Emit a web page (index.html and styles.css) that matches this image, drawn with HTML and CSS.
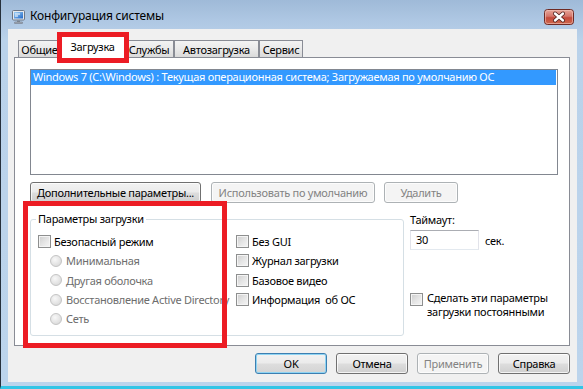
FILE: index.html
```html
<!DOCTYPE html>
<html lang="ru">
<head>
<meta charset="utf-8">
<title>Конфигурация системы</title>
<link rel="stylesheet" href="styles.css">
</head>
<body>
<div class="window">
  <div class="titlebar">
    <svg class="app-icon" width="13" height="14" viewBox="0 0 13 14">
      <defs>
        <linearGradient id="scr" x1="0" y1="0" x2="1" y2="1">
          <stop offset="0" stop-color="#9fd0f5"/>
          <stop offset="1" stop-color="#1f66c7"/>
        </linearGradient>
      </defs>
      <rect x="0.5" y="0.5" width="12" height="9.5" rx="1" fill="#e6e9ee" stroke="#6d7684"/>
      <rect x="2" y="2" width="9" height="6.5" fill="url(#scr)"/>
      <path d="M3 4h5M3 6h3" stroke="#fff" stroke-width="1"/>
      <rect x="5" y="10.5" width="3" height="1.5" fill="#7f8894"/>
      <rect x="2.5" y="12" width="8" height="1.6" rx="0.5" fill="#a6adb8" stroke="#6d7684" stroke-width="0.6"/>
    </svg>
    <span class="title">Конфигурация системы</span>
    <div class="close">
      <svg width="30" height="16" viewBox="0 0 30 16">
        <defs>
          <linearGradient id="cl" x1="0" y1="0" x2="0" y2="1">
            <stop offset="0" stop-color="#e9a99c"/>
            <stop offset="0.45" stop-color="#d4756a"/>
            <stop offset="0.55" stop-color="#c44a3c"/>
            <stop offset="1" stop-color="#cf6a4d"/>
          </linearGradient>
        </defs>
        <rect x="0.5" y="0.5" width="29" height="15" rx="3" fill="url(#cl)" stroke="#6e2a24"/>
        <rect x="1.5" y="1.5" width="27" height="13" rx="2" fill="none" stroke="#f2c5bc" stroke-opacity="0.6"/>
        <path d="M11 4.5l8 7M19 4.5l-8 7" stroke="#4a1f1c" stroke-width="4" stroke-linecap="round"/>
        <path d="M11 4.5l8 7M19 4.5l-8 7" stroke="#ffffff" stroke-width="2.4" stroke-linecap="round"/>
      </svg>
    </div>
  </div>

  <div class="client">
    <div class="tabs">
      <div class="tab t-general">Общие</div>
      <div class="tab t-boot active">Загрузка</div>
      <div class="tab t-services">Службы</div>
      <div class="tab t-startup">Автозагрузка</div>
      <div class="tab t-tools">Сервис</div>
    </div>

    <div class="panel">
      <div class="listbox">
        <div class="item selected">Windows 7 (C:\Windows) : Текущая операционная система; Загружаемая по умолчанию ОС</div>
      </div>

      <div class="btnrow">
        <div class="btn b-adv">Дополнительные параметры...</div>
        <div class="btn disabled b-def">Использовать по умолчанию</div>
        <div class="btn disabled b-del">Удалить</div>
      </div>

      <div class="lower">
        <fieldset class="group">
          <legend>Параметры загрузки</legend>
          <div class="opts">
            <div class="col col-left">
              <div class="opt"><span class="cb"></span>Безопасный режим</div>
              <div class="opt sub disabled"><span class="rb"></span>Минимальная</div>
              <div class="opt sub disabled"><span class="rb"></span>Другая оболочка</div>
              <div class="opt sub disabled"><span class="rb"></span>Восстановление Active Directory</div>
              <div class="opt sub disabled"><span class="rb"></span>Сеть</div>
            </div>
            <div class="col col-right">
              <div class="opt"><span class="cb"></span>Без GUI</div>
              <div class="opt"><span class="cb"></span>Журнал загрузки</div>
              <div class="opt"><span class="cb"></span>Базовое видео</div>
              <div class="opt"><span class="cb"></span>Информация&nbsp; об ОС</div>
            </div>
          </div>
        </fieldset>

        <div class="side">
          <div class="lbl">Таймаут:</div>
          <div class="timeout">
            <div class="input">30</div>
            <span class="unit">сек.</span>
          </div>
          <div class="opt perm"><span class="cb"></span><span class="perm-text">Сделать эти параметры<br>загрузки постоянными</span></div>
        </div>
      </div>
    </div>

    <div class="footer">
      <div class="btn default">OK</div>
      <div class="btn">Отмена</div>
      <div class="btn disabled">Применить</div>
      <div class="btn">Справка</div>
    </div>
  </div>

  <div class="highlight hl-tab"></div>
  <div class="highlight hl-group"></div>
</div>
</body>
</html>
```

FILE: styles.css
```css
* { box-sizing: border-box; }

html, body {
  margin: 0;
  padding: 0;
}

body {
  width: 583px;
  height: 389px;
  overflow: hidden;
  font-family: "Noto Sans", "Open Sans", sans-serif;
  font-size: 11px;
  letter-spacing: -0.27px;
  color: #000;
  background: #bcd3eb;
}

.window {
  position: relative;
  width: 583px;
  height: 389px;
  display: flex;
  flex-direction: column;
  background: linear-gradient(#9fbad8 0, #aec7e3 20px, #bad2ea 40px, #bcd4ec 100%);
  border-left: 1px solid #26303c;
  border-bottom: 3px solid #33c5e6;
  padding: 0 6px 4px 7px;
}

/* ---------- title bar ---------- */
.titlebar {
  height: 29px;
  flex: none;
  display: flex;
  align-items: flex-start;
}

.app-icon {
  margin: 10px 0 0 4px;
  flex: none;
}

.title {
  margin-left: 5px;
  padding-top: 8px;
  font-size: 12px;
  letter-spacing: -0.2px;
  line-height: 16px;
  color: #000;
}

.close {
  margin: 9px 3px 0 auto;
  width: 30px;
  height: 16px;
  line-height: 0;
}

/* ---------- client ---------- */
.client {
  flex: 1;
  background: #f0f0f0;
  padding: 0 7px 0 6px;
  display: flex;
  flex-direction: column;
}

.tabs {
  height: 28px;
  flex: none;
  display: flex;
  align-items: flex-end;
  padding-left: 4px;
}

.tab {
  position: relative;
  height: 17px;
  border: 1px solid #898c95;
  border-bottom: none;
  background: linear-gradient(#f3f3f3, #e9e9e9 50%, #dadada);
  text-align: center;
  line-height: 15px;
  padding-top: 1px;
  white-space: nowrap;
}

.t-general { width: 43px; }
.t-boot { width: 63px; }
.t-services { width: 50px; }
.t-startup { width: 85px; }
.t-tools { width: 44px; }

.tab.active {
  width: 67px;
  height: 22px;
  margin: 0 -2px -1px -2px;
  background: #fff;
  z-index: 2;
  padding-top: 2px;
}

.panel {
  flex: none;
  height: 289px;
  border: 1px solid #898c95;
  background: #fff;
  padding: 11px 10px 0 15px;
  position: relative;
  z-index: 1;
}

.listbox {
  width: 528px;
  height: 106px;
  border: 1px solid #828790;
  background: #fff;
  padding-right: 1px;
}

.item {
  height: 15px;
  line-height: 14px;
  padding-left: 2px;
  white-space: nowrap;
  overflow: hidden;
}

.item.selected {
  background: #3399ff;
  color: #fff;
}

.btnrow {
  display: flex;
  margin-top: 7px;
}

.btn {
  height: 21px;
  border: 1px solid #707070;
  border-radius: 3px;
  background: linear-gradient(#f2f2f2 0%, #ebebeb 48%, #dddddd 52%, #cfcfcf 100%);
  box-shadow: inset 0 0 0 1px rgba(255, 255, 255, 0.75);
  display: flex;
  align-items: center;
  justify-content: center;
  white-space: nowrap;
  line-height: 15px;
  padding-bottom: 1px;
}

.btn.disabled {
  border-color: #adb2b5;
  background: #f4f4f4;
  color: #838383;
  box-shadow: inset 0 0 0 1px #fcfcfc;
}

.btn.default {
  border-color: #3c7fb1;
  box-shadow: inset 0 0 0 1px #8fd4f3;
  background: linear-gradient(#f2f2f2 0%, #ebebeb 48%, #dddddd 52%, #d4d4d4 100%);
}

.b-adv { width: 171px; }
.b-def { width: 164px; margin-left: 10px; }
.b-del { width: 74px; margin-left: 9px; }

.lower {
  display: flex;
  margin-top: 9px;
}

.group {
  width: 374px;
  height: 124px;
  margin: 0;
  padding: 0;
  border: 1px solid #d5dfe5;
  border-radius: 3px;
  box-shadow: inset 1px 1px 0 #fff;
}

.group legend {
  margin-left: 5px;
  padding: 0 2px;
  line-height: 14px;
}

.opts {
  display: flex;
  padding-top: 6px;
}

.col {
  display: flex;
  flex-direction: column;
}

.col-left {
  width: 205px;
  padding-left: 7px;
  overflow: hidden;
}

.col-right {
  padding-left: 0;
}

.opt {
  height: 19.3px;
  display: flex;
  align-items: center;
  white-space: nowrap;
}

.opt.sub {
  padding-left: 12px;
}

.opt.disabled {
  color: #6d6d6d;
}

.cb {
  flex: none;
  width: 13px;
  height: 13px;
  border: 1px solid #8e8f8f;
  background: linear-gradient(135deg, #cdcdcd 0%, #e4e4e4 50%, #f6f6f6 100%);
  box-shadow: inset 0 0 0 1px #f4f4f4;
  margin-right: 3px;
}

.rb {
  flex: none;
  width: 12px;
  height: 12px;
  border-radius: 50%;
  border: 1px solid #c4c4c4;
  background: radial-gradient(circle at 40% 35%, #f8f8f8 0%, #e4e4e4 55%, #d2d2d2 100%);
  margin-right: 4px;
}

.side {
  margin-left: 6px;
  display: flex;
  flex-direction: column;
  padding-top: 1px;
}

.lbl {
  line-height: 14px;
}

.timeout {
  display: flex;
  align-items: center;
  margin-top: 3px;
}

.input {
  width: 69px;
  height: 20px;
  border: 1px solid #abadb3;
  border-color: #abadb3 #e2e3ea #e3e9ef #e2e3ea;
  background: #fff;
  padding-left: 5px;
  line-height: 17px;
}

.unit {
  margin-left: 6px;
}

.opt.perm {
  margin-top: 42px;
  height: auto;
  align-items: flex-start;
}

.opt.perm .cb {
  margin-top: 1px;
  margin-right: 4px;
}

.perm-text {
  line-height: 14px;
  margin-top: -1px;
}

.footer {
  display: flex;
  justify-content: flex-end;
  gap: 9px;
  margin-top: 7px;
}

.footer .btn {
  width: 72px;
}

/* ---------- red annotation frames ---------- */
.highlight {
  position: absolute;
  border: 5px solid #ec1c24;
  z-index: 10;
  pointer-events: none;
}

.hl-tab {
  left: 56px;
  top: 32px;
  width: 72px;
  height: 31px;
}

.hl-group {
  left: 22px;
  top: 201px;
  width: 204px;
  height: 147px;
}
```
